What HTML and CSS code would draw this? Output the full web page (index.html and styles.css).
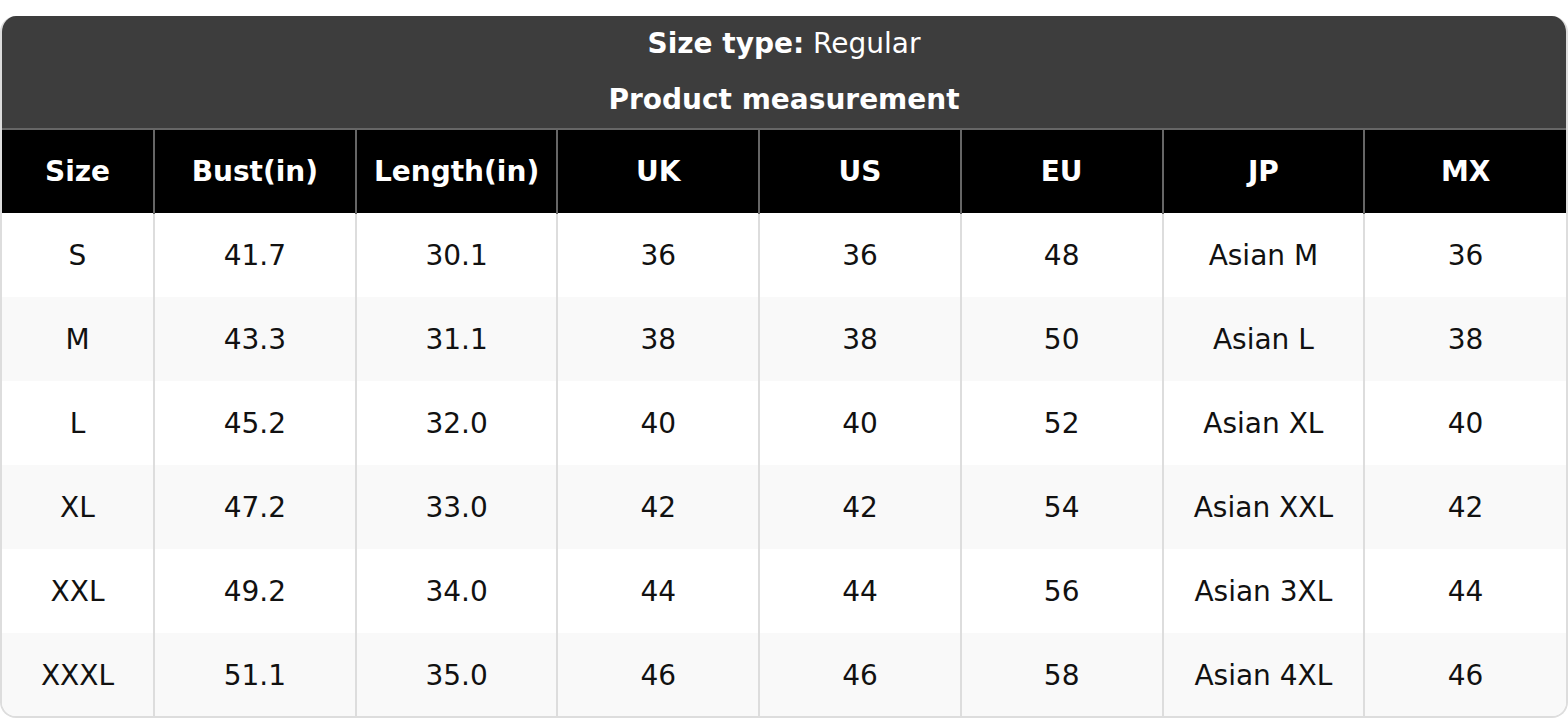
FILE: index.html
```html
<!DOCTYPE html>
<html>
<head>
<meta charset="utf-8">
<link rel="stylesheet" href="styles.css">
</head>
<body>
<div class="card">
  <div class="title">
    <div class="line"><b>Size type:</b> Regular</div>
    <div class="line"><b>Product measurement</b></div>
  </div>
  <table class="chart">
    <colgroup>
      <col class="c-size"><col><col><col><col><col><col><col>
    </colgroup>
    <thead>
      <tr><th>Size</th><th>Bust(in)</th><th>Length(in)</th><th>UK</th><th>US</th><th>EU</th><th>JP</th><th>MX</th></tr>
    </thead>
    <tbody>
      <tr><td>S</td><td>41.7</td><td>30.1</td><td>36</td><td>36</td><td>48</td><td>Asian M</td><td>36</td></tr>
      <tr><td>M</td><td>43.3</td><td>31.1</td><td>38</td><td>38</td><td>50</td><td>Asian L</td><td>38</td></tr>
      <tr><td>L</td><td>45.2</td><td>32.0</td><td>40</td><td>40</td><td>52</td><td>Asian XL</td><td>40</td></tr>
      <tr><td>XL</td><td>47.2</td><td>33.0</td><td>42</td><td>42</td><td>54</td><td>Asian XXL</td><td>42</td></tr>
      <tr><td>XXL</td><td>49.2</td><td>34.0</td><td>44</td><td>44</td><td>56</td><td>Asian 3XL</td><td>44</td></tr>
      <tr><td>XXXL</td><td>51.1</td><td>35.0</td><td>46</td><td>46</td><td>58</td><td>Asian 4XL</td><td>46</td></tr>
    </tbody>
  </table>
</div>
</body>
</html>
```

FILE: styles.css
```css
html, body {
  margin: 0;
  padding: 0;
  background: #fff;
}
body {
  padding-top: 16px;
  font-family: "DejaVu Sans", sans-serif;
  font-size: 28px;
  color: #111;
}
.card {
  width: 1568px;
  box-sizing: border-box;
  border: 2px solid #ddd;
  border-top: none;
  border-radius: 16px;
  overflow: hidden;
}
.title {
  background: #3d3d3d;
  color: #fff;
  text-align: center;
}
.line {
  height: 56px;
  line-height: 56px;
}
.line b { font-weight: bold; }
.chart {
  width: 100%;
  border-collapse: collapse;
  table-layout: fixed;
}
.c-size { width: 152px; }
.chart th, .chart td {
  padding: 0;
  text-align: center;
  vertical-align: middle;
}
.chart th {
  background: #000;
  color: #fff;
  font-weight: bold;
  height: 82px;
  border: 2px solid #666;
  border-bottom: none;
}
.chart th:first-child { border-left: none; }
.chart th:last-child { border-right: none; }
.chart td {
  height: 82px;
  border-left: 2px solid #ddd;
  border-right: 2px solid #ddd;
  border-top: 2px solid transparent;
}
.chart td:first-child { border-left: none; }
.chart td:last-child { border-right: none; }
.chart tbody tr { background: #fff; }
.chart tbody tr:nth-child(even) { background: #f9f9f9; }
```
